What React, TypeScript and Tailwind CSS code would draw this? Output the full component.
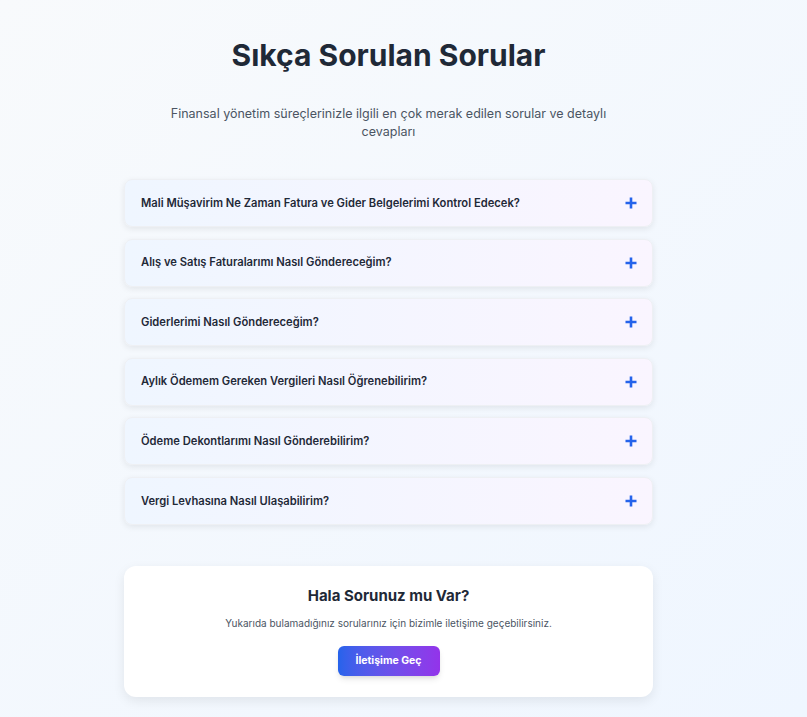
import React from "react";

const questions = [
  "Mali Müşavirim Ne Zaman Fatura ve Gider Belgelerimi Kontrol Edecek?",
  "Alış ve Satış Faturalarımı Nasıl Göndereceğim?",
  "Giderlerimi Nasıl Göndereceğim?",
  "Aylık Ödemem Gereken Vergileri Nasıl Öğrenebilirim?",
  "Ödeme Dekontlarımı Nasıl Gönderebilirim?",
  "Vergi Levhasına Nasıl Ulaşabilirim?",
];

function Plus() {
  return (
    <svg width="12" height="12" viewBox="0 0 12 12" className="shrink-0">
      <path d="M6 0.5v11M0.5 6h11" stroke="#2563eb" strokeWidth="2.6" strokeLinecap="butt" />
    </svg>
  );
}

export default function App() {
  return (
    <div
      className="min-h-[717px] w-full bg-gradient-to-br from-[#f8fafc] to-[#eff6ff] pb-[20px]"
      style={{ fontFamily: "Inter, 'Noto Sans', sans-serif" }}
    >
      <div className="ml-[124px] w-[529px] pt-[37px]">
        <h1 className="text-center text-[30px] font-bold leading-[36px] text-[#1f2937]">
          Sıkça Sorulan Sorular
        </h1>
        <p className="mx-auto mt-[32px] max-w-[448px] text-center text-[12.5px] leading-[18px] text-[#4b5563]">
          Finansal yönetim süreçlerinizle ilgili en çok merak edilen sorular ve detaylı cevapları
        </p>
        <div className="mt-[38px] flex flex-col gap-[11.6px]">
          {questions.map((q) => (
            <div
              key={q}
              className="flex h-[48px] items-center justify-between rounded-lg border border-[#eef0f4] bg-gradient-to-r from-[#eff6ff] to-[#faf5ff] pl-[16px] pr-[15px] shadow-[0_2px_6px_rgba(0,0,0,0.08)]"
            >
              <span className="text-[11.2px] font-semibold text-[#1f2937]">{q}</span>
              <Plus />
            </div>
          ))}
        </div>
        <div className="mt-[41px] flex flex-col items-center rounded-xl bg-white px-6 pb-[21px] pt-[19px] shadow-[0_4px_12px_rgba(0,0,0,0.08)]">
          <h2 className="text-[15px] font-bold leading-[22px] text-[#1f2937]">Hala Sorunuz mu Var?</h2>
          <p className="mt-[9px] text-[10px] leading-[14px] text-[#4b5563]">
            Yukarıda bulamadığınız sorularınız için bizimle iletişime geçebilirsiniz.
          </p>
          <button className="mt-[16px] h-[30px] w-[102px] rounded-md bg-gradient-to-r from-[#2563eb] to-[#9333ea] text-[10.5px] font-bold text-white shadow-md">
            İletişime Geç
          </button>
        </div>
      </div>
    </div>
  );
}
